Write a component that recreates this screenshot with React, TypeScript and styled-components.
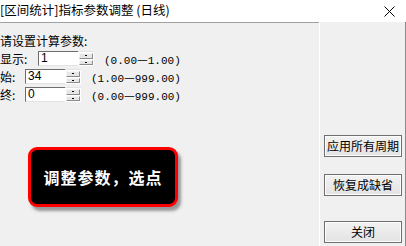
import React from "react";
import styled, { createGlobalStyle } from "styled-components";

const Global = createGlobalStyle`
  html, body { margin: 0; padding: 0; background: #f0f0f0; }
  body { font-family: "Noto Sans CJK SC", "Liberation Sans", sans-serif; overflow: hidden; }
`;

const Window = styled.div`
  width: 406px;
  height: 246px;
  display: flex;
  flex-direction: column;
  background: #f0f0f0;
  overflow: hidden;
`;

const TitleBar = styled.div`
  height: 22px;
  flex: none;
  background: #ffffff;
  display: flex;
  align-items: center;
  justify-content: space-between;
  padding-right: 11px;
`;

const TitleText = styled.span`
  font-size: 12.5px;
  color: #000;
  line-height: 18px;
  margin-top: -3px;
  white-space: nowrap;
`;

const Body = styled.div`
  flex: 1;
  display: flex;
  min-height: 0;
`;

const LeftPanel = styled.div`
  position: relative;
  width: 319px;
  flex: none;
  border-top: 1px solid #a0a0a0;
  display: flex;
  flex-direction: column;
  padding-top: 10px;
  box-sizing: border-box;
`;

const Divider = styled.div`
  width: 1px;
  background: #ffffff;
  flex: none;
`;

const RightPanel = styled.div`
  flex: 1;
  display: flex;
  flex-direction: column;
  padding-left: 4px;
  border-right: 1px solid #8a8a8a;
`;

const Heading = styled.div`
  font-size: 12px;
  line-height: 15px;
  height: 15px;
  color: #000;
  white-space: nowrap;
  margin-bottom: 3px;
`;

const Row = styled.div<{ $gap: number }>`
  display: flex;
  align-items: center;
  height: 15px;
  margin-top: ${(p) => p.$gap}px;
`;

const Label = styled.span<{ $w: number }>`
  width: ${(p) => p.$w}px;
  font-size: 12px;
  line-height: 15px;
  color: #000;
  white-space: nowrap;
  flex: none;
`;

const Input = styled.div`
  width: 40px;
  height: 15px;
  flex: none;
  box-sizing: border-box;
  background: #fff;
  border-top: 1px solid #6d6d6d;
  border-left: 1px solid #6d6d6d;
  border-bottom: 1px solid #e3e3e3;
  font-family: "Liberation Sans", sans-serif;
  font-size: 12px;
  line-height: 13px;
  padding-left: 2px;
  color: #000;
`;

const Spin = styled.div`
  width: 16px;
  height: 15px;
  flex: none;
  box-sizing: border-box;
  background: #fff;
  padding: 1px;
  border-top: 1px solid #e3e3e3;
  display: flex;
  flex-direction: column;
  gap: 1px;
  margin-right: 10px;
`;

const SpinBtn = styled.div`
  flex: 1;
  background: #e6e6e6;
  border: 1px solid #8c8c8c;
  border-top-color: #f6f6f6;
  border-left-color: #f6f6f6;
  display: flex;
  align-items: center;
  justify-content: center;
  &::after {
    content: "";
    width: 2px;
    height: 1px;
    background: #000;
  }
`;

const Range = styled.span`
  font-family: "Liberation Mono", "DejaVu Sans Mono", monospace;
  font-size: 11px;
  color: #000;
  white-space: nowrap;
`;

const Dash = styled.span`
  font-family: "Noto Sans CJK SC", sans-serif;
  font-size: 12px;
`;

const Toast = styled.div`
  position: absolute;
  left: 28px;
  top: 124px;
  width: 150px;
  height: 60px;
  box-sizing: border-box;
  background: #000;
  border: 3px solid #ff0000;
  border-radius: 9px;
  box-shadow: 3px 4px 3px rgba(80, 80, 80, 0.55);
  display: flex;
  align-items: center;
  justify-content: center;
  color: #fff;
  font-size: 16px;
  font-weight: bold;
  letter-spacing: 1px;
  white-space: nowrap;
`;

const Button = styled.button<{ $top: number }>`
  margin-top: ${(p) => p.$top}px;
  width: 78px;
  height: 22px;
  box-sizing: border-box;
  border: 1px solid #6f6f6f;
  background: linear-gradient(#f2f2f2, #e3e3e3);
  box-shadow: inset 0 0 0 1px #fcfcfc;
  font-family: "Noto Sans CJK SC", sans-serif;
  font-size: 12px;
  color: #000;
  padding: 0;
  line-height: 18px;
  white-space: nowrap;
`;

const Close = () => (
  <svg width="11" height="11" viewBox="0 0 11 11">
    <path d="M0.5 0.5 L10.5 10.5 M10.5 0.5 L0.5 10.5" stroke="#000" strokeWidth="1" />
  </svg>
);

const rows = [
  { label: "显示:", w: 38, value: "1", lo: "0.00", hi: "1.00", gap: 0 },
  { label: "始:", w: 25, value: "34", lo: "1.00", hi: "999.00", gap: 3 },
  { label: "终:", w: 25, value: "0", lo: "0.00", hi: "999.00", gap: 3 },
];

export default function App() {
  return (
    <Window>
      <Global />
      <TitleBar>
        <TitleText>[区间统计]指标参数调整 (日线)</TitleText>
        <Close />
      </TitleBar>
      <Body>
        <LeftPanel>
          <Heading>请设置计算参数:</Heading>
          {rows.map((r) => (
            <Row key={r.label} $gap={r.gap}>
              <Label $w={r.w}>{r.label}</Label>
              <Input>{r.value}</Input>
              <Spin>
                <SpinBtn />
                <SpinBtn />
              </Spin>
              <Range>
                ({r.lo}
                <Dash>—</Dash>
                {r.hi})
              </Range>
            </Row>
          ))}
          <Toast>调整参数，选点</Toast>
        </LeftPanel>
        <Divider />
        <RightPanel>
          <Button $top={113}>应用所有周期</Button>
          <Button $top={17}>恢复成缺省</Button>
          <Button $top={25}>关闭</Button>
        </RightPanel>
      </Body>
    </Window>
  );
}
